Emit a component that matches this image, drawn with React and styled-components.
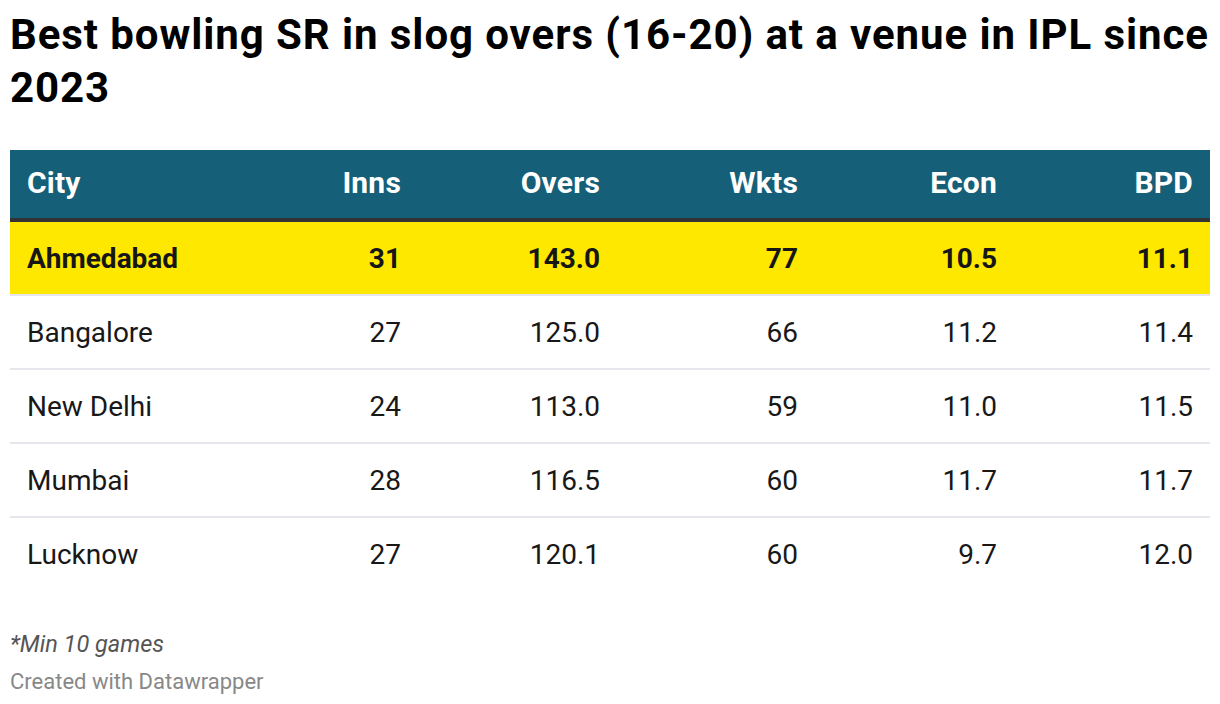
import React from "react";
import styled, { createGlobalStyle } from "styled-components";

const Global = createGlobalStyle`
  html, body { margin: 0; padding: 0; background: #fff; }
  body { font-family: Roboto, "Liberation Sans", sans-serif; color: #181818; }
`;

const Page = styled.div`
  padding: 8px 10px 0 10px;
  width: 1200px;
`;

const Title = styled.h1`
  margin: 0;
  font-size: 42px;
  line-height: 53px;
  font-weight: 700;
  color: #000;
  letter-spacing: 0.92px;
`;

const Table = styled.div`
  margin-top: 36px;
  display: grid;
  grid-template-columns: 200px 200px 199px 198px 199px 204px;
`;

const HeadCell = styled.div`
  height: 68px;
  box-sizing: border-box;
  background: #155f79;
  color: #fff;
  font-weight: 700;
  font-size: 30px;
  letter-spacing: 0.2px;
  display: flex;
  align-items: center;
  justify-content: ${(p) => (p.$left ? "flex-start" : "flex-end")};
  padding: ${(p) => (p.$left ? "0 0 3px 17px" : p.$last ? "0 17px 3px 0" : "0 9px 3px 0")};
  border-bottom: 4px solid #333;
  height: 72px;
`;

const Cell = styled.div`
  height: 72px;
  background: ${(p) => (p.$hl ? "#ffe800" : "#fff")};
  font-weight: ${(p) => (p.$hl ? 700 : 400)};
  color: ${(p) => (p.$hl ? "#161616" : "#181818")};
  font-size: 28px;
  display: flex;
  align-items: center;
  justify-content: ${(p) => (p.$left ? "flex-start" : "flex-end")};
  padding: ${(p) => (p.$left ? "0 0 0 17px" : p.$last ? "0 17px 0 0" : "0 9px 0 0")};
  border-bottom: ${(p) => (p.$noBorder ? "0" : "2px solid #e6e7ec")};
`;

const Notes = styled.div`
  margin-top: 40px;
  font-size: 23.5px;
  font-style: italic;
  color: #555;
  line-height: 28px;
`;

const Credit = styled.div`
  margin-top: 10px;
  font-size: 22px;
  color: #888;
  line-height: 28px;
`;

const headers = ["City", "Inns", "Overs", "Wkts", "Econ", "BPD"];
const rows = [
  ["Ahmedabad", "31", "143.0", "77", "10.5", "11.1"],
  ["Bangalore", "27", "125.0", "66", "11.2", "11.4"],
  ["New Delhi", "24", "113.0", "59", "11.0", "11.5"],
  ["Mumbai", "28", "116.5", "60", "11.7", "11.7"],
  ["Lucknow", "27", "120.1", "60", "9.7", "12.0"],
];

export default function App() {
  return (
    <Page>
      <Global />
      <Title>Best bowling SR in slog overs (16-20) at a venue in IPL since 2023</Title>
      <Table>
        {headers.map((h, i) => (
          <HeadCell key={h} $left={i === 0} $last={i === headers.length - 1}>
            {h}
          </HeadCell>
        ))}
        {rows.map((r, ri) =>
          r.map((v, ci) => (
            <Cell
              key={ri + "-" + ci}
              $hl={ri === 0}
              $left={ci === 0}
              $last={ci === r.length - 1}
              $noBorder={ri === rows.length - 1}
            >
              {v}
            </Cell>
          ))
        )}
      </Table>
      <Notes>*Min 10 games</Notes>
      <Credit>Created with Datawrapper</Credit>
    </Page>
  );
}
